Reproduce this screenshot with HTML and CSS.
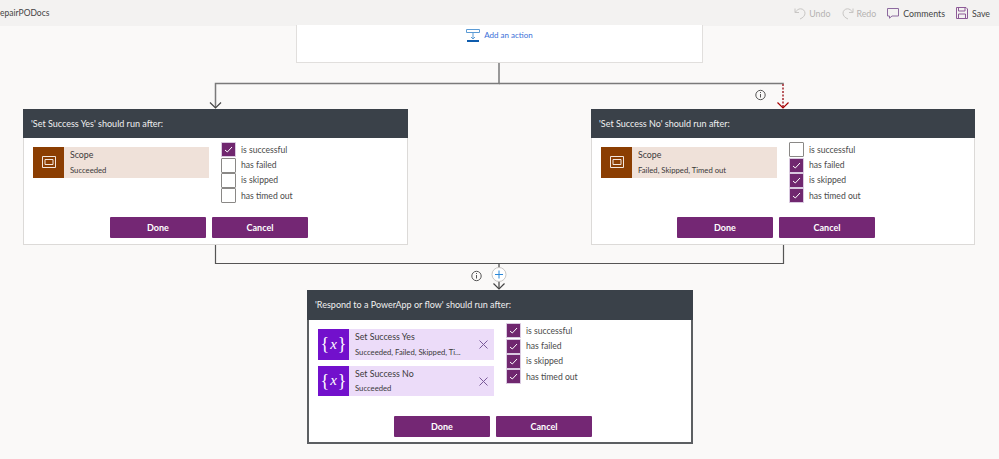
FILE: index.html
```html
<!DOCTYPE html>
<html lang="en">
<head>
<meta charset="utf-8">
<title>RepairPODocs</title>
<link rel="stylesheet" href="styles.css">
</head>
<body>
<header class="topbar">
  <span class="flow-name">epairPODocs</span>
  <nav class="actions">
    <span class="action disabled">
      <svg width="13" height="13" viewBox="0 0 13 13" fill="none" stroke="#c8c6c4"><path d="M1 1.500v4h4M1.200 5.300C3 3 4.500 1.800 6.500 1.800 9 1.800 11 3.800 11 6.200c0 2.600-2 4.500-5 5.800"/></svg>
      Undo
    </span>
    <span class="action disabled">
      <svg width="13" height="13" viewBox="0 0 13 13" fill="none" stroke="#c8c6c4"><path d="M12 1.500v4H8M11.800 5.300C10 3 8.500 1.800 6.500 1.800 4 1.800 2 3.800 2 6.200c0 2.600 2 4.500 5 5.800"/></svg>
      Redo
    </span>
    <span class="action">
      <svg width="12" height="12" viewBox="0 0 12 12" fill="none" stroke="#8d6a9f"><path d="M.5 1.500h11v7.500H5L2.500 11.200V9H.5z"/></svg>
      Comments
    </span>
    <span class="action">
      <svg width="12" height="12" viewBox="0 0 12 12" fill="none" stroke="#8d5a97"><path d="M.5.500h9.500l1.500 1.500v9.500H.5z"/><path d="M2.500.500v3.500h6.500V.500M2.500 11.500V7h7v4.500"/></svg>
      Save
    </span>
  </nav>
</header>

<main class="canvas">
  <svg class="wires" width="999" height="433" viewBox="0 26 999 433" fill="none">
    <path d="M499 63V83.500H215.500V107" stroke="#7a7a7a" stroke-width="1.500"/>
    <path d="M499 83.500H783.800" stroke="#7a7a7a" stroke-width="1.500"/>
    <path d="M783 84V107" stroke="#a4262c" stroke-width="1.500" stroke-dasharray="2 1.500"/>
    <path d="M210 102.500l5.500 5.500 5.500-5.500" stroke="#444" stroke-width="1.200"/>
    <path d="M777.500 102.500l5.500 5.500 5.500-5.500" stroke="#a80000" stroke-width="1.200"/>
    <path d="M215.500 245V263.500H783.500V245" stroke="#555" stroke-width="1.200"/>
    <path d="M499 264V289" stroke="#666" stroke-width="1.500"/>
    <path d="M493.500 283.500l5.500 5.500 5.500-5.500" stroke="#444" stroke-width="1.200"/>
    <circle cx="499" cy="274.500" r="7" fill="#fff" stroke="#c8c6c4"/>
    <path d="M499 270.500v8M495 274.500h8" stroke="#2b88d8"/>
    <g stroke="#555">
      <circle cx="476.500" cy="276" r="4.700"/>
      <path d="M476.500 275v3.500M476.500 273v1"/>
      <circle cx="760.500" cy="95" r="4.700"/>
      <path d="M760.500 94v3.500M760.500 92v1"/>
    </g>
  </svg>

  <section class="node trigger">
    <span class="add-action">
      <svg width="14" height="14" viewBox="0 0 14 14" fill="none"><path d="M.5.500h13v3H.5z" stroke="#5b9bd5"/><path d="M7 3.500v6.500M5 8l2 2 2-2" stroke="#5b9bd5"/><path d="M1 11h12v2H1z" fill="#0f5cad"/></svg>
      Add an action
    </span>
  </section>

  <section class="node card card-yes">
    <h2 class="card-head">'Set Success Yes' should run after:</h2>
    <div class="card-body">
      <div class="tiles">
        <div class="tile tile-scope">
          <span class="tile-icon"><svg width="14" height="12" viewBox="0 0 14 12" fill="none" stroke="#f3e7df"><path d="M.5.500h13v11H.5z"/><path d="M3 3.500h8v5H3z"/></svg></span>
          <span class="tile-text"><b>Scope</b><small>Succeeded</small></span>
        </div>
      </div>
      <ul class="checks">
        <li class="check on">is successful</li>
        <li class="check">has failed</li>
        <li class="check">is skipped</li>
        <li class="check">has timed out</li>
      </ul>
    </div>
    <div class="card-foot"><button class="btn">Done</button><button class="btn">Cancel</button></div>
  </section>

  <section class="node card card-no">
    <h2 class="card-head">'Set Success No' should run after:</h2>
    <div class="card-body">
      <div class="tiles">
        <div class="tile tile-scope">
          <span class="tile-icon"><svg width="14" height="12" viewBox="0 0 14 12" fill="none" stroke="#f3e7df"><path d="M.5.500h13v11H.5z"/><path d="M3 3.500h8v5H3z"/></svg></span>
          <span class="tile-text"><b>Scope</b><small>Failed, Skipped, Timed out</small></span>
        </div>
      </div>
      <ul class="checks">
        <li class="check">is successful</li>
        <li class="check on">has failed</li>
        <li class="check on">is skipped</li>
        <li class="check on">has timed out</li>
      </ul>
    </div>
    <div class="card-foot"><button class="btn">Done</button><button class="btn">Cancel</button></div>
  </section>

  <section class="node card card-respond">
    <h2 class="card-head">'Respond to a PowerApp or flow' should run after:</h2>
    <div class="card-body">
      <div class="tiles">
        <div class="tile tile-var">
          <span class="tile-icon var-icon"><span class="brace">{</span><i>x</i><span class="brace">}</span></span>
          <span class="tile-text"><b>Set Success Yes</b><small>Succeeded, Failed, Skipped, Ti...</small></span>
          <svg class="remove" width="9" height="9" viewBox="0 0 9 9" stroke="#7a5a9a"><path d="M.5.500l8 8M8.500.500l-8 8"/></svg>
        </div>
        <div class="tile tile-var">
          <span class="tile-icon var-icon"><span class="brace">{</span><i>x</i><span class="brace">}</span></span>
          <span class="tile-text"><b>Set Success No</b><small>Succeeded</small></span>
          <svg class="remove" width="9" height="9" viewBox="0 0 9 9" stroke="#7a5a9a"><path d="M.5.500l8 8M8.500.500l-8 8"/></svg>
        </div>
      </div>
      <ul class="checks">
        <li class="check on">is successful</li>
        <li class="check on">has failed</li>
        <li class="check on">is skipped</li>
        <li class="check on">has timed out</li>
      </ul>
    </div>
    <div class="card-foot"><button class="btn">Done</button><button class="btn">Cancel</button></div>
  </section>
</main>
</body>
</html>
```
FILE: styles.css
```css
* { box-sizing: border-box; }
html, body { margin: 0; height: 100%; overflow: hidden; }
body {
  font-family: Lato, "Open Sans", sans-serif;
  font-size: 9px;
  color: #3b3a39;
  background: #faf9f8;
}
.topbar {
  height: 26px;
  background: #f3f2f1;
  display: flex;
  align-items: center;
  justify-content: space-between;
  padding-right: 9px;
}
.flow-name { font-size: 8.500px; color: #444; }
.actions { display: flex; gap: 11px; }
.action { display: flex; align-items: center; gap: 4px; font-size: 8.800px; color: #444; }
.action.disabled { color: #b5b3b1; gap: 2px; }

.canvas { position: relative; height: 433px; }
.wires { position: absolute; left: 0; top: 0; }
.node { position: absolute; background: #fff; }

.trigger {
  left: 296px;
  top: -1px;
  width: 407px;
  height: 38px;
  border: 1px solid #e1dfdd;
  border-top: 0;
  display: flex;
  justify-content: center;
  padding-top: 4px;
}
.add-action { display: flex; align-items: flex-start; gap: 4px; color: #3a6fd8; font-size: 8px; line-height: 12px; }

.card { border: 1px solid #dcdad8; display: flex; flex-direction: column; }
.card-yes { left: 23px; top: 83px; width: 385px; height: 136px; }
.card-no { left: 591px; top: 83px; width: 384px; height: 136px; }
.card-respond { left: 307px; top: 264px; width: 386px; height: 154px; border: 2px solid #5c5f62; }

.card-head {
  margin: -1px -1px 0;
  height: 29px;
  background: #3a4149;
  color: #f0f0f0;
  font-size: 9px;
  font-weight: 400;
  line-height: 29px;
  padding-left: 8px;
}
.card-respond .card-head { margin: -2px -2px 0; height: 30px; line-height: 30px; }

.card-body { display: flex; flex: 1; padding: 4px 0 0 9px; gap: 12px; }
.card-respond .card-body { padding: 3px 0 0 9px; }
.tiles { width: 176px; padding-top: 5px; display: flex; flex-direction: column; gap: 6px; }
.card-respond .tiles { padding-top: 6px; }
.tile { display: flex; height: 30.500px; align-items: stretch; position: relative; }
.tile-scope { background: #efe1d9; }
.tile-var { background: #ecdcf9; }
.tile-icon { width: 31px; flex: none; display: flex; align-items: center; justify-content: center; background: #8b3e02; }
.var-icon { background: #7210cc; color: #fff; font-family: "Liberation Serif", serif; gap: 1px; }
.var-icon i { font-size: 15px; }
.brace { font-size: 18px; font-weight: 400; line-height: 1; }
.tile-text { padding: 1px 0 0 6px; display: flex; flex-direction: column; line-height: 14.500px; }
.tile-text b { font-weight: 400; font-size: 8.800px; color: #3b3a39; }
.tile-text small { font-size: 7.700px; color: #3b3a39; }
.remove { position: absolute; right: 6px; top: 11px; }

.checks { list-style: none; margin: 0; padding: 0; }
.check {
  display: flex;
  align-items: center;
  gap: 5px;
  height: 15.400px;
  font-size: 8.600px;
  color: #4a4a4a;
}
.check::before {
  content: "";
  width: 13px;
  height: 13px;
  flex: none;
  border: 1px solid #8a8886;
  border-radius: 1px;
  background: #fff;
}
.check.on::before {
  border-color: #d9c9e0;
  background: #70276f center/9px 9px no-repeat url("data:image/svg+xml,%3Csvg xmlns='http://www.w3.org/2000/svg' viewBox='0 0 9 9' fill='none' stroke='%23fff'%3E%3Cpath d='M1 5l2.300 2L8 2'/%3E%3C/svg%3E");
}

.card-foot { display: flex; justify-content: flex-end; gap: 6px; padding: 0 99px 6px 0; }
.card-respond .card-foot { padding: 0 99px 5px 0; }
.btn {
  width: 96px;
  height: 21px;
  border: 0;
  border-radius: 1px;
  background: #742774;
  color: #fff;
  font: 700 9px Lato, sans-serif;
  padding: 0;
}
```
